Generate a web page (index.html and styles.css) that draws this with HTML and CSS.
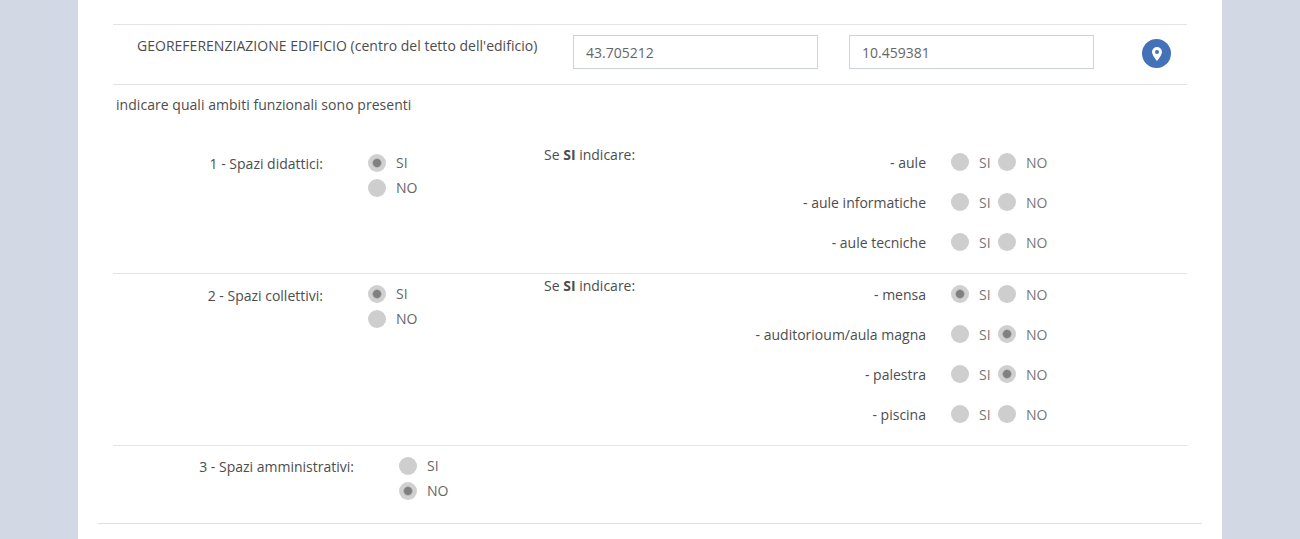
FILE: index.html
```html
<!DOCTYPE html>
<html lang="it">
<head>
<meta charset="utf-8">
<title>Ambiti funzionali</title>
<link rel="stylesheet" href="styles.css">
</head>
<body>
<main class="card">
  <div class="form">
    <div class="geo">
      <div class="geo-label">GEOREFERENZIAZIONE EDIFICIO (centro del tetto dell'edificio)</div>
      <input class="field field-lat" type="text" value="43.705212">
      <input class="field field-lon" type="text" value="10.459381">
      <button class="pin" type="button" aria-label="Mappa">
        <svg width="10" height="14" viewBox="0 0 10 14"><path fill="#fff" fill-rule="evenodd" d="M5 0a5 5 0 0 0-5 5c0 3.4 5 9 5 9s5-5.600 5-9a5 5 0 0 0-5-5zm0 3a2 2 0 1 1 0 4 2 2 0 0 1 0-4z"/></svg>
      </button>
    </div>
    <p class="intro">indicare quali ambiti funzionali sono presenti</p>

    <section class="block block-first">
      <div class="name">1 - Spazi didattici:</div>
      <div class="choice">
        <label class="opt"><input type="radio" name="a1" checked><span>SI</span></label>
        <label class="opt"><input type="radio" name="a1"><span>NO</span></label>
      </div>
      <div class="hint">Se <b>SI</b> indicare:</div>
      <div class="subs">
        <div class="sub"><span class="sub-name">- aule</span><label class="sub-opt"><input type="radio" name="b1"><span>SI</span></label><label class="sub-opt"><input type="radio" name="b1"><span>NO</span></label></div>
        <div class="sub"><span class="sub-name">- aule informatiche</span><label class="sub-opt"><input type="radio" name="b2"><span>SI</span></label><label class="sub-opt"><input type="radio" name="b2"><span>NO</span></label></div>
        <div class="sub"><span class="sub-name">- aule tecniche</span><label class="sub-opt"><input type="radio" name="b3"><span>SI</span></label><label class="sub-opt"><input type="radio" name="b3"><span>NO</span></label></div>
      </div>
    </section>

    <section class="block block-second">
      <div class="name">2 - Spazi collettivi:</div>
      <div class="choice">
        <label class="opt"><input type="radio" name="a2" checked><span>SI</span></label>
        <label class="opt"><input type="radio" name="a2"><span>NO</span></label>
      </div>
      <div class="hint">Se <b>SI</b> indicare:</div>
      <div class="subs">
        <div class="sub"><span class="sub-name">- mensa</span><label class="sub-opt"><input type="radio" name="c1" checked><span>SI</span></label><label class="sub-opt"><input type="radio" name="c1"><span>NO</span></label></div>
        <div class="sub"><span class="sub-name">- auditorioum/aula magna</span><label class="sub-opt"><input type="radio" name="c2"><span>SI</span></label><label class="sub-opt"><input type="radio" name="c2" checked><span>NO</span></label></div>
        <div class="sub"><span class="sub-name">- palestra</span><label class="sub-opt"><input type="radio" name="c3"><span>SI</span></label><label class="sub-opt"><input type="radio" name="c3" checked><span>NO</span></label></div>
        <div class="sub"><span class="sub-name">- piscina</span><label class="sub-opt"><input type="radio" name="c4"><span>SI</span></label><label class="sub-opt"><input type="radio" name="c4"><span>NO</span></label></div>
      </div>
    </section>

    <section class="block block-third">
      <div class="name name-wide">3 - Spazi amministrativi:</div>
      <div class="choice">
        <label class="opt"><input type="radio" name="a3"><span>SI</span></label>
        <label class="opt"><input type="radio" name="a3" checked><span>NO</span></label>
      </div>
    </section>
  </div>
  <div class="end-rule"></div>
</main>
</body>
</html>
```
FILE: styles.css
```css
* {
  box-sizing: border-box;
}

html,
body {
  height: 100%;
}

body {
  margin: 0;
  background: #d3d9e4;
  font-family: "Open Sans", "Liberation Sans", sans-serif;
  font-size: 14px;
  color: #555;
  overflow: hidden;
}

.card {
  width: 1144px;
  height: 539px;
  margin: 0 78px;
  padding: 24px 20px 0;
  background: #fff;
}

.form {
  padding: 0 15px;
}

.geo {
  display: flex;
  align-items: flex-start;
  height: 61px;
  padding-top: 10px;
  border-top: 1px solid #e4e4e4;
  border-bottom: 1px solid #e4e4e4;
}

.geo-label {
  width: 460px;
  padding: 1px 0 0 24px;
  line-height: 20px;
  letter-spacing: 0.02px;
  color: #4d4d4d;
  white-space: nowrap;
}

.field {
  width: 245px;
  height: 34px;
  padding: 0 12px;
  border: 1px solid #cdd3de;
  border-radius: 0;
  background: #fff;
  font: inherit;
  color: #666;
}

.field-lon {
  margin-left: 31px;
}

.pin {
  display: flex;
  align-items: center;
  justify-content: center;
  width: 29px;
  height: 29px;
  margin: 4px 0 0 48px;
  padding: 0;
  border: 0;
  border-radius: 50%;
  background: #4472b8;
}

.intro {
  margin: 10px 0 28px 3px;
  line-height: 20px;
  letter-spacing: 0.04px;
  color: #4d4d4d;
}

.block {
  display: flex;
  align-items: flex-start;
}

.block-first {
  height: 130px;
}

.block-second {
  height: 172px;
  border-top: 1px solid #e4e4e4;
}

.block-third {
  height: 78px;
  border-top: 1px solid #e4e4e4;
}

.name {
  width: 210px;
  padding-top: 1px;
  line-height: 40px;
  text-align: right;
  color: #4d4d4d;
  white-space: nowrap;
}

.block-second .name {
  padding-top: 2px;
}

.name-wide {
  width: 241px;
}

.choice {
  width: 176px;
  margin-left: 45px;
  padding-top: 7px;
}

.opt {
  display: flex;
  align-items: center;
  height: 25px;
  color: #666;
}

.opt input,
.sub-opt input {
  appearance: none;
  flex: none;
  width: 18px;
  height: 18px;
  margin: 0 10px 0 0;
  border-radius: 50%;
  background: #cecece;
}

.opt input:checked,
.sub-opt input:checked {
  background: radial-gradient(circle, #808080 0 3.500px, #d0d0d0 5px);
}

.hint {
  width: 160px;
  line-height: 24px;
  color: #4d4d4d;
  white-space: nowrap;
}

.subs {
  flex: 1;
}

.block-first .subs {
  margin-top: -1px;
}

.sub {
  display: flex;
  align-items: center;
  height: 40px;
}

.sub-name {
  width: 222px;
  margin-right: 25px;
  text-align: right;
  color: #4d4d4d;
  white-space: nowrap;
}

.sub-opt {
  display: flex;
  align-items: center;
  width: 47px;
  color: #777;
}

.end-rule {
  border-top: 1px solid #e0e0e0;
}
```
